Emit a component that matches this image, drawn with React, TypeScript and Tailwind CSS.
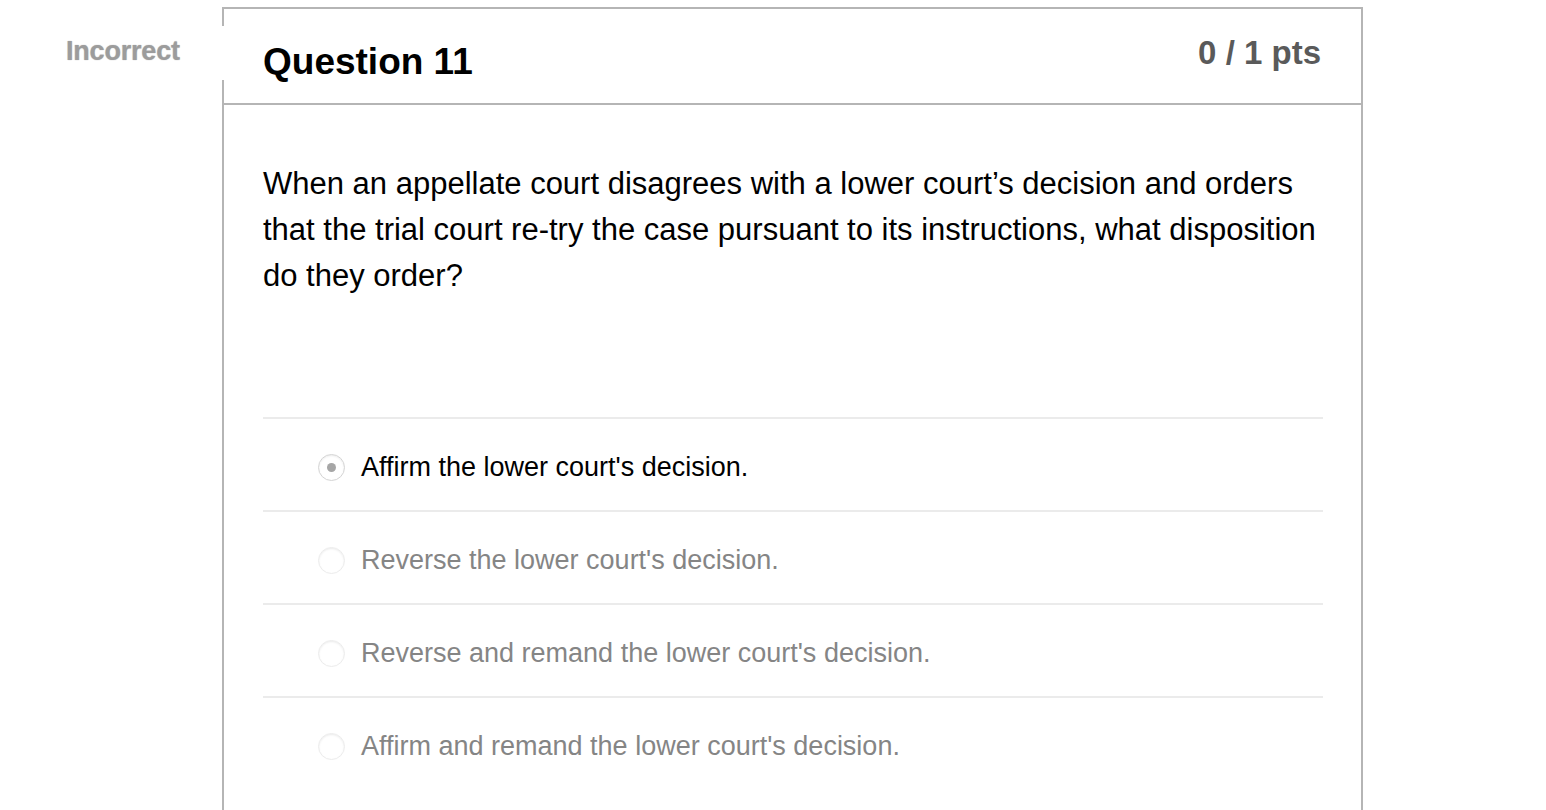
const OPTIONS = [
  { text: "Affirm the lower court's decision.", selected: true },
  { text: "Reverse the lower court's decision.", selected: false },
  { text: "Reverse and remand the lower court's decision.", selected: false },
  { text: "Affirm and remand the lower court's decision.", selected: false },
];

function Radio({ checked }: { checked: boolean }) {
  return (
    <span
      className={
        "flex size-[27px] shrink-0 items-center justify-center rounded-full border bg-white shadow-[inset_0_1px_2px_rgba(0,0,0,0.08)] " +
        (checked ? "border-[#d4d4d4]" : "border-[#ececec]")
      }
    >
      {checked && <span className="size-[9px] rounded-full bg-[#a6a6a6]" />}
    </span>
  );
}

export default function App() {
  return (
    <div className="min-h-screen bg-white font-['Liberation_Sans',Arial,sans-serif] text-black">
      <div className="relative ml-[222px] mt-[7px] w-[1141px] border-2 border-b-0 border-[#b5b5b5] pb-[60px]">
        {/* answer label sits over the card edge */}
        <div className="absolute left-[-160px] top-[17px] flex h-[54px] w-[162px] items-start bg-white pl-[2px] pt-[12px]">
          <span className="text-[27px] font-bold leading-none tracking-[-0.2px] text-[#9c9c9c] [text-shadow:0_0_1px_#c9c9c9,0_0_1px_#c9c9c9]">
            Incorrect
          </span>
        </div>

        <div className="flex h-[96px] items-start justify-between border-b-2 border-[#b5b5b5] pl-[39px] pr-[40px]">
          <h2 className="pt-[34px] text-[37px] font-bold leading-none">Question 11</h2>
          <span className="pt-[27px] text-[33px] font-bold leading-none text-[#5a5a5a]">0 / 1 pts</span>
        </div>

        <div className="pl-[39px] pr-[38px] pt-[56px]">
          <p className="text-[31px] leading-[46px]">
            When an appellate court disagrees with a lower court’s decision and orders that the trial court re-try the case pursuant to its instructions, what disposition do they order?
          </p>

          <div className="mt-[118px]">
            {OPTIONS.map((o) => (
              <div key={o.text} className="flex h-[93px] items-center gap-[16px] border-t-2 border-[#ebebeb] pl-[55px] pt-[6px]">
                <Radio checked={o.selected} />
                <span className={"text-[27px] leading-none " + (o.selected ? "text-black" : "text-[#858585]")}>
                  {o.text}
                </span>
              </div>
            ))}
          </div>
        </div>
      </div>
    </div>
  );
}
